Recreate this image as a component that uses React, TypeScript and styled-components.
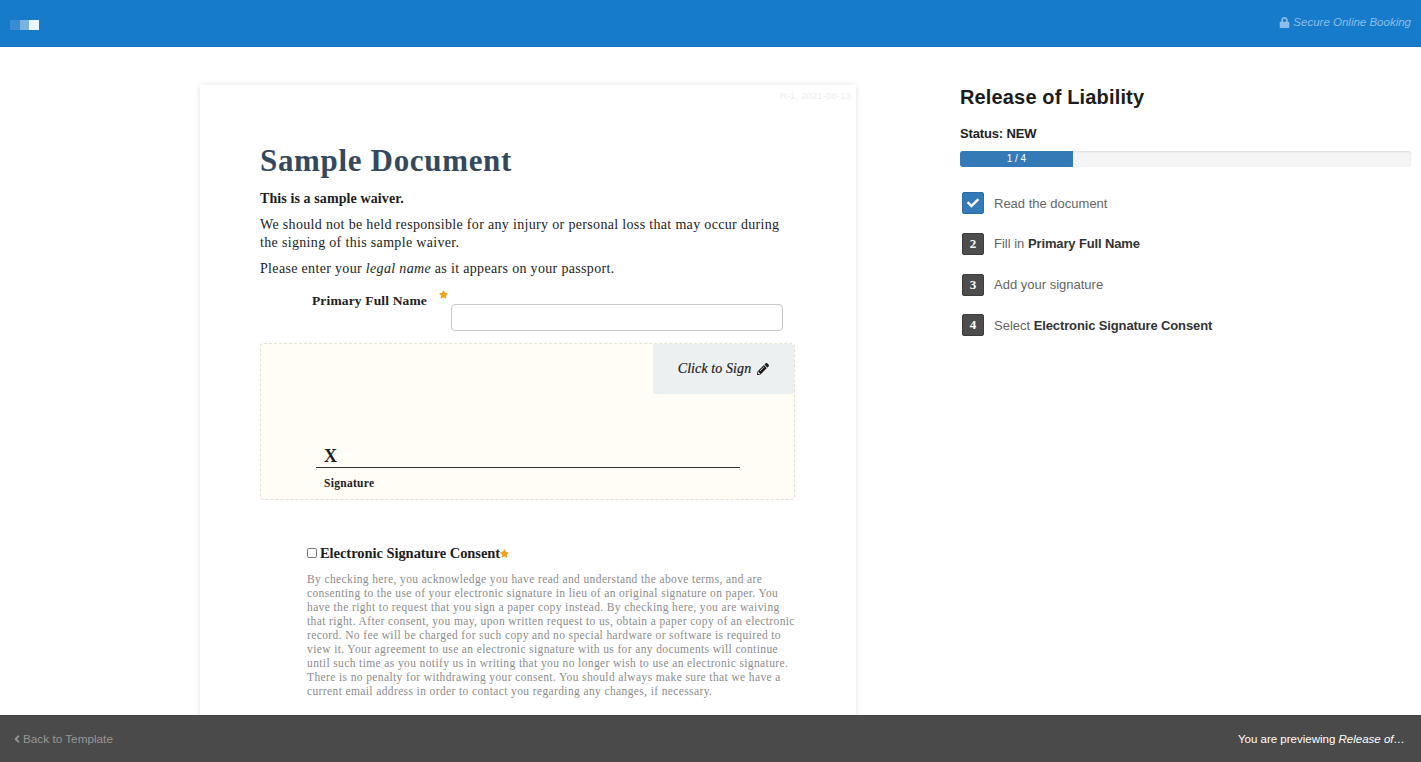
import React from "react";
import styled, { createGlobalStyle } from "styled-components";
import { FaLock, FaPencilAlt, FaStar, FaCheck, FaAngleLeft } from "react-icons/fa";

const Global = createGlobalStyle`
  html, body { margin: 0; padding: 0; height: 100%; overflow: hidden; background: #fff; }
  body { font-family: "Liberation Sans", Arial, sans-serif; color: #222; }
  * { box-sizing: border-box; }
`;
const serif = `"Liberation Serif", "Times New Roman", serif`;

const Page = styled.div`height: 762px; display: flex; flex-direction: column; overflow: hidden;`;
const Header = styled.header`
  height: 47px; flex: none; background: #177bcc; display: flex; align-items: center;
  justify-content: space-between; padding: 3px 10px 0 10px; border-bottom: 1px solid #1672bd;
`;
const Logo = styled.div`display: flex; filter: blur(.4px);`;
const LogoCell = styled.span<{ $o: number }>`
  width: 9.5px; height: 10px; background: #fff; opacity: ${p => p.$o};
`;
const Secure = styled.div`
  display: flex; align-items: center; gap: 3px; font-size: 11.5px; font-style: italic;
  color: #8dbde6; margin-top: -5px;
`;
const Main = styled.main`
  flex: 1; min-height: 0; display: grid; grid-template-columns: 656px 451px; column-gap: 104px;
  padding: 38px 10px 0 200px;
`;
const Paper = styled.article`
  position: relative; height: 760px; background: #fff; padding: 57px 60px 0 60px;
  box-shadow: 0 0 6px rgba(0,0,0,.11); font-family: ${serif}; color: #1d1d1d;
`;
const Revision = styled.div`
  position: absolute; top: 5px; right: 5px; font-family: "Liberation Sans", sans-serif;
  font-size: 9.8px; color: #eeeeee;
`;
const DocTitle = styled.h1`
  margin: 0 0 10px; font-size: 31px; line-height: 38px; font-weight: 700; color: #34495e;
  letter-spacing: .67px; font-family: ${serif};
`;
const Para = styled.p`
  margin: 0 0 8px; font-size: 14px; line-height: 18px; letter-spacing: .33px;
  white-space: nowrap;
`;
const Strong = styled.strong`font-weight: 700; letter-spacing: .1px;`;
const NameRow = styled.div`
  display: grid; grid-template-columns: 167px 12px 332px; column-gap: 12px; margin-top: 12px; height: 53px;
`;
const NameLabel = styled.label`
  text-align: right; font-size: 13.5px; font-weight: 700; line-height: 20px; letter-spacing: .15px; color: #222;
  padding-top: 1px;
`;
const Req = styled.span`
  color: #f5a31f; font-size: 9px; line-height: 12px; display: inline-flex;
`;
const NameInput = styled.div`
  height: 27px; margin: 14px 0 0 -12px; width: 332px; background: #fff;
  border: 1px solid #c8c8c8; border-radius: 4px;
`;
const SignBox = styled.section`
  position: relative; width: 535px; height: 157px; background: #fffdf6;
  border: 1px dashed #e3e3d5; border-radius: 4px; padding: 94px 54px 0 55px;
`;
const SignButton = styled.button`
  position: absolute; top: 0; right: 0; width: 141px; height: 50px; border: 0; background: #ecf0f1;
  border-radius: 0 3px 0 3px; font-family: ${serif}; font-style: italic; font-size: 14px; letter-spacing: .1px;
  -webkit-text-stroke: .2px #1d1d1d;
  color: #1d1d1d; display: flex; align-items: center; justify-content: center; gap: 6px; padding: 0;
`;
const SignLine = styled.div`
  border-bottom: 1px solid #333; height: 30px; padding-left: 8px; font-size: 18px; font-weight: 700; line-height: 36px;
`;
const SignLabel = styled.div`
  padding: 9px 0 0 8px; font-size: 11.5px; font-weight: 700; letter-spacing: .3px; color: #222;
`;
const Consent = styled.section`margin: 46px 0 0 47px; width: 500px;`;
const ConsentHead = styled.div`display: flex; align-items: center; height: 16px; margin-top: -1px;`;
const Box = styled.span`
  width: 10px; height: 10px; margin-right: 3px; border: 1px solid #777; border-radius: 2px; background: #fff;
`;
const ConsentTitle = styled.span`font-size: 14.5px; font-weight: 700; color: #1d1d1d; letter-spacing: -.05px;`;
const ConsentText = styled.div`
  margin-top: 11px; font-size: 11.5px; line-height: 14px; letter-spacing: .38px; color: #8c8c8c; white-space: nowrap;
`;
const Side = styled.aside`padding-top: 0;`;
const SideTitle = styled.h2`margin: 0; font-size: 20px; line-height: 24px; font-weight: 700; color: #1c1c1c; letter-spacing: .15px;`;
const Status = styled.div`margin-top: 17px; font-size: 13px; line-height: 16px; font-weight: 700; color: #222; letter-spacing: -.15px;`;
const Track = styled.div`
  margin-top: 9px; height: 16px; border-radius: 3px; background: #f5f5f5; overflow: hidden;
  box-shadow: inset 0 1px 2px rgba(0,0,0,.1);
`;
const Fill = styled.div`
  height: 100%; background: #337ab7; color: #fff; font-size: 10px; line-height: 15px; text-align: center;
`;
const Steps = styled.ol`list-style: none; margin: 24.7px 0 0; padding: 0 0 0 2px; display: flex; flex-direction: column; gap: 17.67px;`;
const Step = styled.li`display: flex; align-items: center; gap: 10px; height: 23px; font-size: 13px; color: #666;`;
const StepBadge = styled.span<{ $done?: boolean }>`
  width: 22px; height: 22px; flex: none; border-radius: 2px; display: flex; align-items: center; justify-content: center;
  background: ${p => p.$done ? "#337ab7" : "#4d4d4d"}; color: #fff; border: 1px solid ${p => p.$done ? "#2e6da4" : "#3d3d3d"};
  font-family: ${serif}; font-weight: 700; font-size: 13px;
`;
const StepStrong = styled.strong`font-weight: 700; color: #333; letter-spacing: -.13px;`;
const Footer = styled.footer`
  position: fixed; left: 0; right: 0; bottom: 0; height: 47px; background: #4a4a4a; border-top: 1px solid #444;
  display: flex; align-items: center; justify-content: space-between; padding: 0 16px 0 11px;
`;
const Back = styled.a`display: flex; align-items: center; color: #969696; font-size: 11.75px; margin-top: -1px;`;
const Preview = styled.div`color: #fff; font-size: 11.5px;`;

const consentLines = [
  "By checking here, you acknowledge you have read and understand the above terms, and are",
  "consenting to the use of your electronic signature in lieu of an original signature on paper. You",
  "have the right to request that you sign a paper copy instead. By checking here, you are waiving",
  "that right. After consent, you may, upon written request to us, obtain a paper copy of an electronic",
  "record. No fee will be charged for such copy and no special hardware or software is required to",
  "view it. Your agreement to use an electronic signature with us for any documents will continue",
  "until such time as you notify us in writing that you no longer wish to use an electronic signature.",
  "There is no penalty for withdrawing your consent. You should always make sure that we have a",
  "current email address in order to contact you regarding any changes, if necessary.",
];

export default function App() {
  return (
    <Page>
      <Global />
      <Header>
        <Logo>
          <LogoCell $o={0.15} />
          <LogoCell $o={0.42} />
          <LogoCell $o={0.92} />
        </Logo>
        <Secure><FaLock size={11} />Secure Online Booking</Secure>
      </Header>
      <Main>
        <Paper>
          <Revision>R-1, 2021-08-13</Revision>
          <DocTitle>Sample Document</DocTitle>
          <Para><Strong>This is a sample waiver.</Strong></Para>
          <Para>We should not be held responsible for any injury or personal loss that may occur during<br />the signing of this sample waiver.</Para>
          <Para>Please enter your <em>legal name</em> as it appears on your passport.</Para>
          <NameRow>
            <NameLabel>Primary Full Name</NameLabel>
            <Req><FaStar /></Req>
            <NameInput />
          </NameRow>
          <SignBox>
            <SignButton>Click to Sign <FaPencilAlt size={12} /></SignButton>
            <SignLine>X</SignLine>
            <SignLabel>Signature</SignLabel>
          </SignBox>
          <Consent>
            <ConsentHead>
              <Box />
              <ConsentTitle>Electronic Signature Consent</ConsentTitle>
              <Req><FaStar /></Req>
            </ConsentHead>
            <ConsentText>
              {consentLines.map(l => <div key={l}>{l}</div>)}
            </ConsentText>
          </Consent>
        </Paper>
        <Side>
          <SideTitle>Release of Liability</SideTitle>
          <Status>Status: NEW</Status>
          <Track><Fill style={{ width: "25%" }}>1 / 4</Fill></Track>
          <Steps>
            <Step><StepBadge $done><FaCheck size={12} /></StepBadge>Read the document</Step>
            <Step><StepBadge>2</StepBadge><span>Fill in <StepStrong>Primary Full Name</StepStrong></span></Step>
            <Step><StepBadge>3</StepBadge>Add your signature</Step>
            <Step><StepBadge>4</StepBadge><span>Select <StepStrong>Electronic Signature Consent</StepStrong></span></Step>
          </Steps>
        </Side>
      </Main>
      <Footer>
        <Back><FaAngleLeft size={12} />Back to Template</Back>
        <Preview>You are previewing <em>Release of…</em></Preview>
      </Footer>
    </Page>
  );
}
